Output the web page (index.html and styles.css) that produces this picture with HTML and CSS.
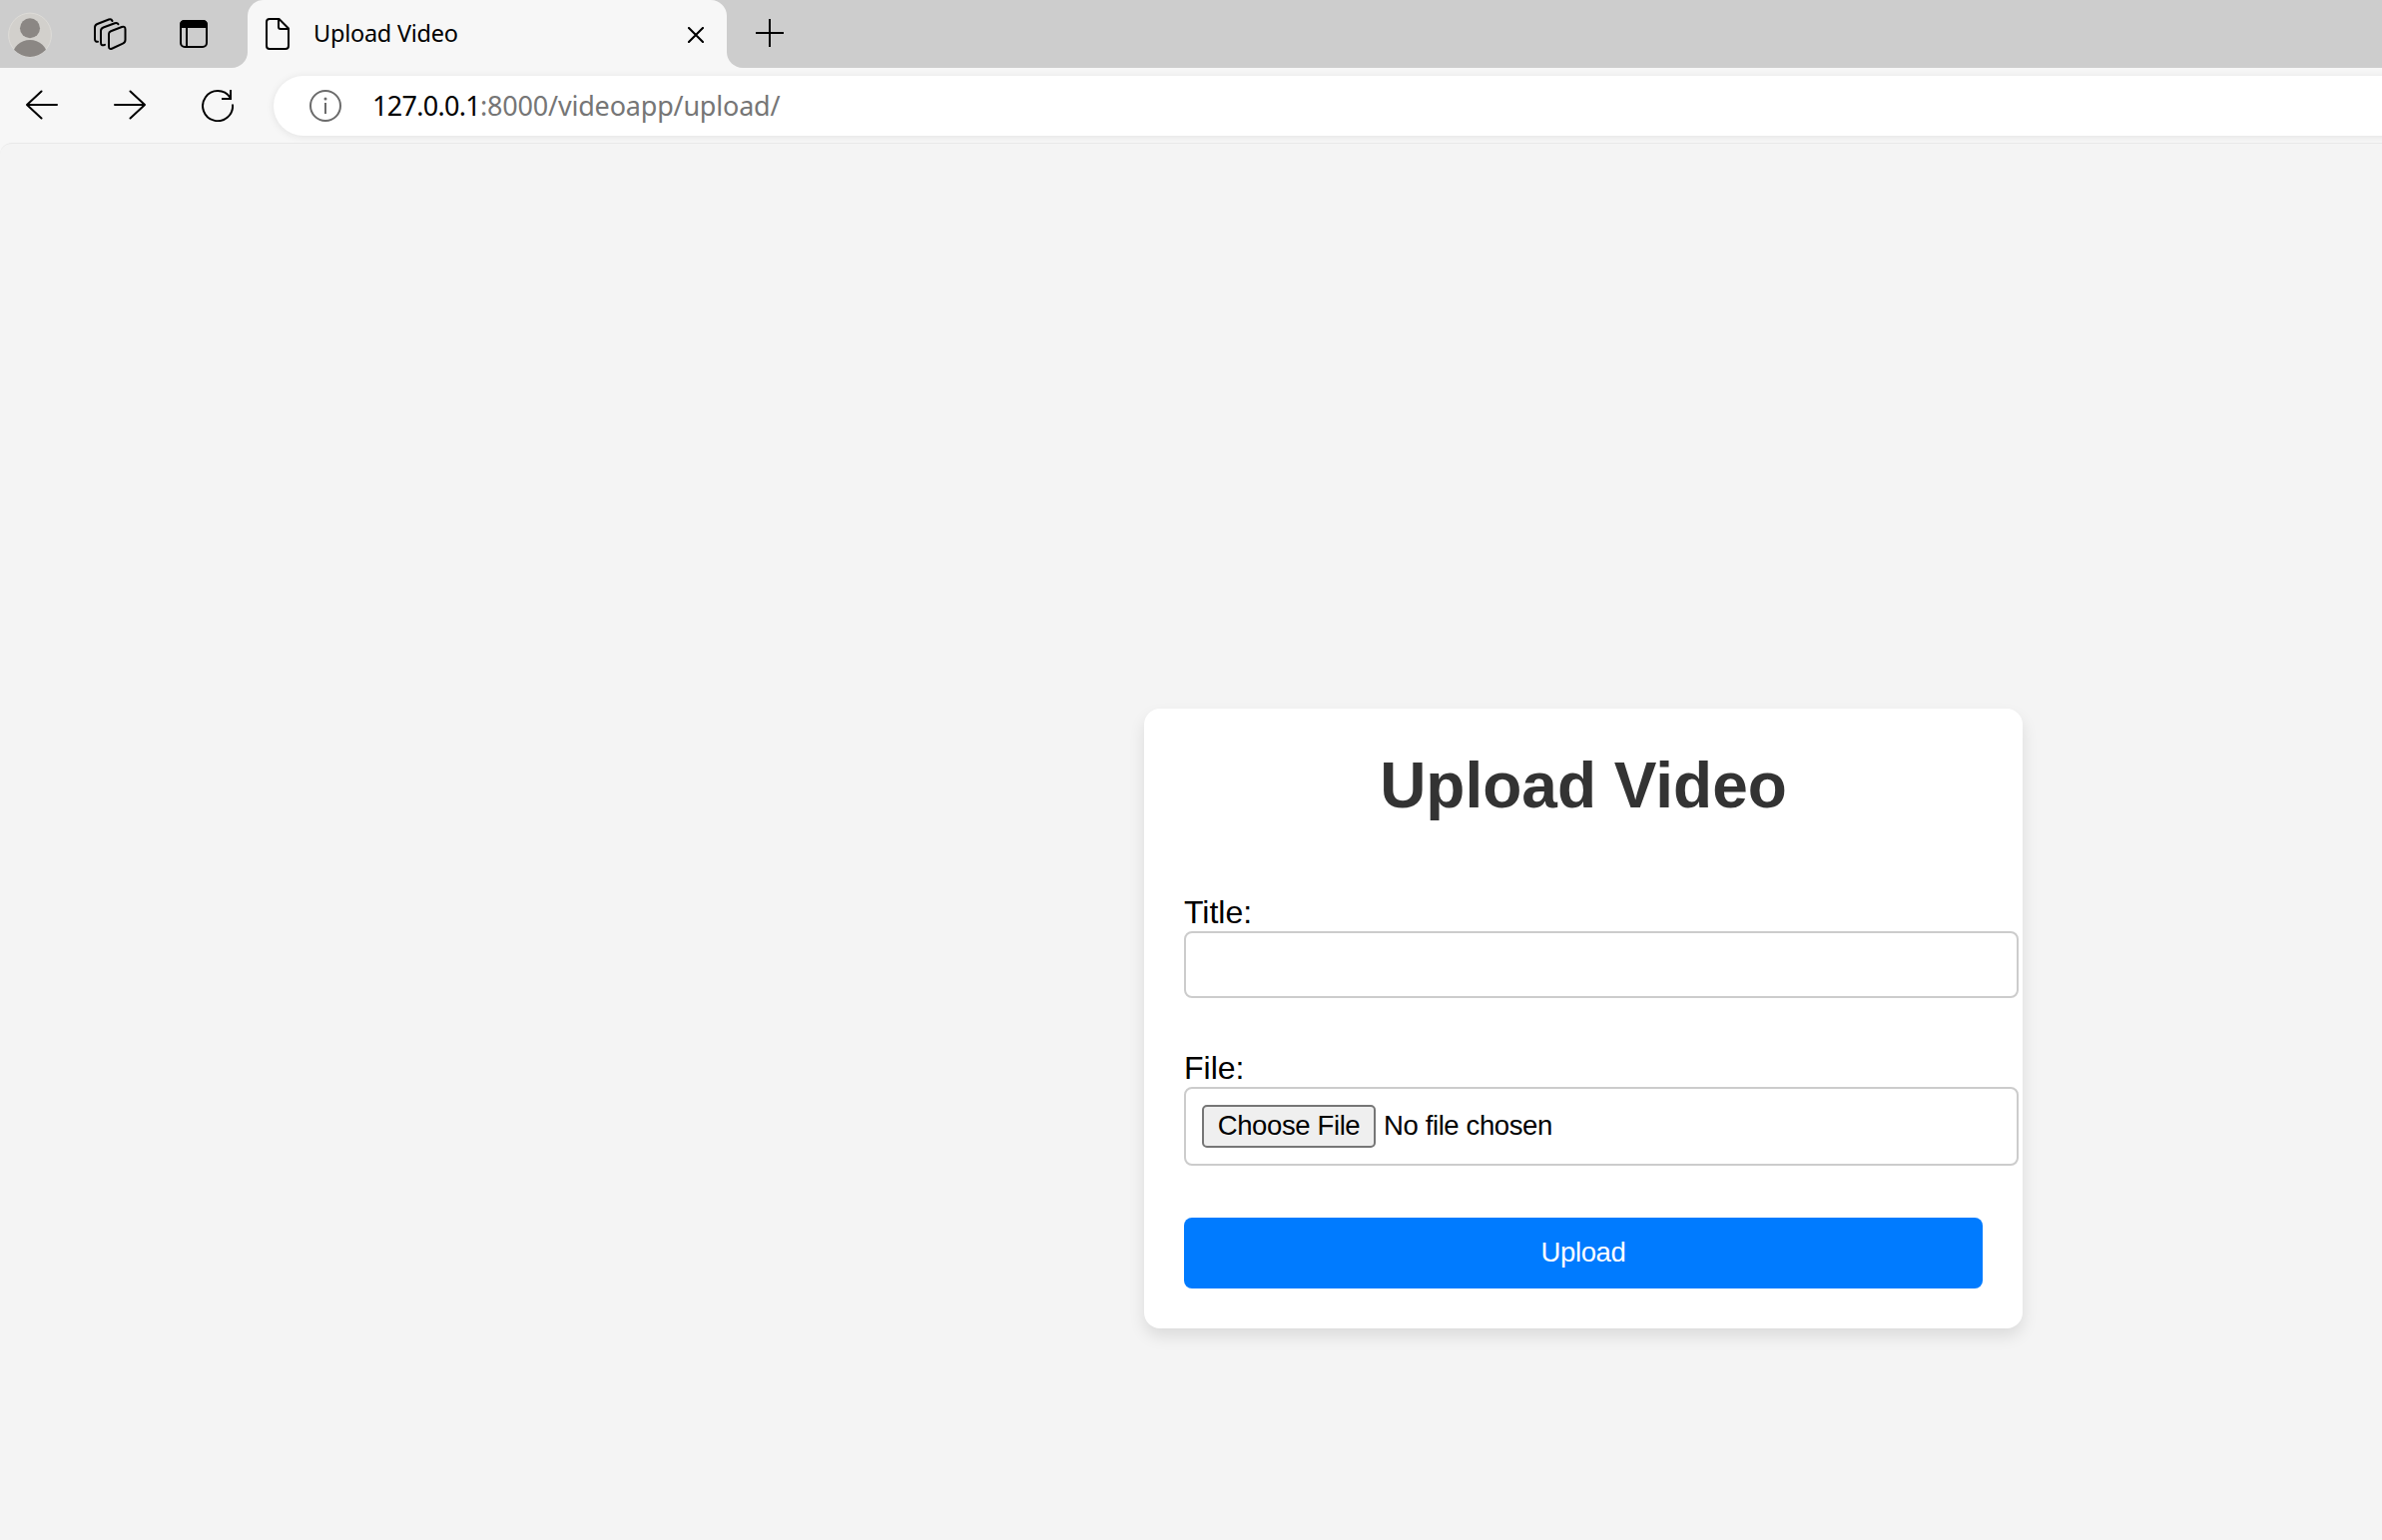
FILE: index.html
```html
<!DOCTYPE html>
<html lang="en">
<head>
<meta charset="utf-8">
<title>Upload Video</title>
<link rel="stylesheet" href="styles.css">
</head>
<body>
<div class="browser">
  <header class="tab-strip">
    <div class="window-tools">
      <svg class="avatar" width="44" height="46" viewBox="0 0 44 46">
        <defs><clipPath id="disc"><ellipse cx="22" cy="23" rx="21.5" ry="22"/></clipPath></defs>
        <ellipse cx="22" cy="23" rx="21.4" ry="21.9" fill="#d2d0cc" stroke="#dedcd8"/>
        <g clip-path="url(#disc)" fill="#8b8784"><circle cx="22" cy="16.3" r="10"/><ellipse cx="22" cy="44" rx="17.5" ry="16"/></g>
      </svg>
      <svg class="icon-stack" width="34" height="34" viewBox="0 0 34 34" fill="none" stroke="#000" stroke-width="2" stroke-linecap="round" stroke-linejoin="round">
        <path d="M17 13.200 28 9q3.500-1.200 3.500 2.500V22q0 2.500-2.500 3.600L18.500 30.500Q15 32 15 28.500V16q0-2 2-2.800Z"/>
        <path d="M11 26.800Q7 28.500 7 24.500V13q0-2.500 2.500-3.500L21 5.200q2.500-.8 3.500 1"/>
        <path d="M4 23.800Q1 24 1 21V9.500Q1 7 3.500 6L15 1.500q2.500-.8 3.500 1.500"/>
      </svg>
      <svg class="icon-panel" width="28" height="28" viewBox="0 0 28 28">
        <rect x="1" y="1" width="26" height="26" rx="4" fill="none" stroke="#000" stroke-width="2"/>
        <path d="M0 8V5Q0 0 5 0H23Q28 0 28 5V8ZM6 8H8V27H6Z"/>
      </svg>
    </div>
    <div class="tab">
      <svg width="24" height="32" viewBox="0 0 24 32" fill="none" stroke="#000" stroke-width="2" stroke-linejoin="round">
        <path d="M4 1H13.500L23 10.500V28Q23 31 20 31H4Q1 31 1 28V4Q1 1 4 1ZM13 1V9Q13 11 15 11H23"/>
      </svg>
      <span class="tab-title">Upload Video</span>
      <svg class="tab-close" width="16" height="16" viewBox="0 0 16 16" stroke="#000" stroke-width="2.100" stroke-linecap="round"><path d="M1 1 15 15M15 1 1 15"/></svg>
    </div>
    <div class="strip-rest">
      <svg width="28" height="28" viewBox="0 0 28 28" stroke="#000" stroke-width="2"><path d="M14 0V28M0 14H28"/></svg>
    </div>
  </header>
  <nav class="toolbar">
    <svg class="nav-icon" width="32" height="30" viewBox="0 0 32 30" fill="none" stroke="#000" stroke-width="2" stroke-linecap="round" stroke-linejoin="round"><path d="M31 15H1M15.500 1.500 1 15 15.500 28.500"/></svg>
    <svg class="nav-icon" width="32" height="30" viewBox="0 0 32 30" fill="none" stroke="#000" stroke-width="2" stroke-linecap="round" stroke-linejoin="round"><path d="M1 15H31M16.500 1.500 31 15 16.500 28.500"/></svg>
    <svg class="nav-icon" width="32" height="32" viewBox="0 0 32 32" fill="none" stroke="#000" stroke-width="2"><path d="M31 14.500A15 15 0 1 1 28.500 7.700M29 0V9H20"/></svg>
    <div class="address">
      <svg width="32" height="32" viewBox="0 0 32 32" fill="none" stroke="#6b6b6b" stroke-width="2"><circle cx="16" cy="16" r="15"/><path d="M16 13V24"/><circle cx="16" cy="9" r="1.500" fill="#6b6b6b" stroke="none"/></svg>
      <span class="url"><span class="host">127.0.0.1</span>:8000/videoapp/upload/</span>
    </div>
  </nav>
  <main class="page">
    <form class="card">
      <h1>Upload Video</h1>
      <label class="label" for="title">Title:</label>
      <input class="field" id="title" type="text">
      <span class="label file-label">File:</span>
      <div class="field file-field">
        <button class="choose" type="button">Choose File</button>
        <span class="file-status">No file chosen</span>
      </div>
      <button class="upload" type="button">Upload</button>
    </form>
  </main>
</div>
</body>
</html>
```
FILE: styles.css
```css
* { box-sizing: border-box; }
body { margin: 0; overflow: hidden; background: #f7f7f7; font-family: "Liberation Sans", Arial, sans-serif; }
svg { display: block; flex: none; }
.browser { height: 1543px; display: flex; flex-direction: column; overflow: hidden; }

.tab-strip { height: 68px; flex: none; display: flex; background: linear-gradient(#cdcdcd 0 34px, #f7f7f7 34px); }
.window-tools { width: 248px; padding: 12px 0 0 8px; display: flex; background: #cdcdcd; border-bottom-right-radius: 16px; }
.icon-stack { margin: 6px 0 0 42px; }
.icon-panel { margin: 8px 0 0 52px; }
.tab { width: 480px; padding: 0 23px 0 18px; display: flex; align-items: center; background: #f7f7f7; border-radius: 16px 16px 0 0; }
.tab-title { margin: -2px 0 0 24px; font: 23.500px/34px "Noto Sans", sans-serif; letter-spacing: -0.250px; white-space: nowrap; }
.tab-close { margin: 2px 0 0 auto; }
.strip-rest { flex: 1; padding: 19px 0 0 29px; background: #cdcdcd; border-bottom-left-radius: 16px; }

.toolbar { height: 75px; flex: none; display: flex; align-items: flex-start; gap: 56px; padding: 8px 0 0 26px; }
.nav-icon { margin-top: 14px; }
.address { flex: 1; height: 60px; margin: 0 -40px 0 -16px; padding-left: 36px; display: flex; align-items: center; gap: 31px; border-radius: 30px 0 0 30px; background: #fff; box-shadow: 0 1px 9px rgba(0, 0, 0, .09); }
.url { font: 27px/36px "Noto Sans", sans-serif; letter-spacing: -0.200px; color: #767676; white-space: nowrap; }
.host { color: #000; letter-spacing: -0.700px; }

.page { flex: 1; padding: 566px 0 0 1146px; background: #f4f4f4; border-top: 1px solid #e8e8e8; border-top-left-radius: 12px; }
.card { width: 880px; height: 621px; padding: 40px; display: flex; flex-direction: column; border-radius: 16px; background: #fff; box-shadow: 0 8px 16px rgba(0, 0, 0, .1); }
h1 { margin: 0; font-size: 64px; line-height: 74px; text-align: center; color: #333; }
.label { margin-top: 72px; height: 37px; font-size: 32px; line-height: 37px; }
.file-label { margin-top: 52px; }
.field { width: 836px; height: 67px; flex: none; padding: 16px; border: 2px solid #ccc; border-radius: 8px; background: #fff; outline: 0; }
.file-field { height: 79px; display: flex; align-items: center; gap: 8px; }
.choose, .file-status, .upload { font: 27.500px/30px "Liberation Sans", Arial, sans-serif; letter-spacing: -0.380px; }
.file-status { padding-bottom: 2px; }
.choose { width: 174px; height: 43px; padding: 0 0 2px; border: 2px solid #767676; border-radius: 5px; background: #efefef; color: #000; }
.upload { margin-top: 52px; height: 71px; flex: none; padding: 0 0 2px; border: 0; border-radius: 8px; background: #007bff; color: #fff; }
```
